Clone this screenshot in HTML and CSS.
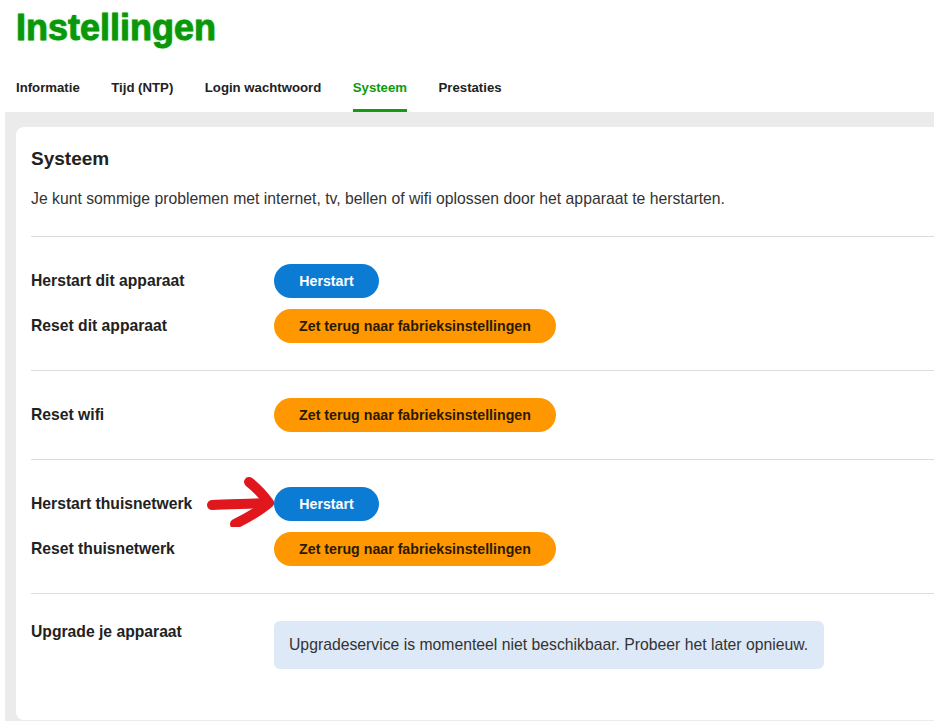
FILE: index.html
```html
<!DOCTYPE html>
<html lang="nl">
<head>
<meta charset="utf-8">
<title>Instellingen</title>
<link rel="stylesheet" href="styles.css">
</head>
<body>
<h1 class="page-title">Instellingen</h1>
<nav class="tabs">
  <a class="tab">Informatie</a>
  <a class="tab">Tijd (NTP)</a>
  <a class="tab">Login wachtwoord</a>
  <a class="tab tab-active">Systeem</a>
  <a class="tab">Prestaties</a>
</nav>
<div class="panel">
  <div class="card">
    <h2 class="card-title">Systeem</h2>
    <p class="card-desc">Je kunt sommige problemen met internet, tv, bellen of wifi oplossen door het apparaat te herstarten.</p>

    <section class="section">
      <div class="row">
        <div class="label">Herstart dit apparaat</div>
        <button class="btn btn-blue">Herstart</button>
      </div>
      <div class="row">
        <div class="label">Reset dit apparaat</div>
        <button class="btn btn-orange">Zet terug naar fabrieksinstellingen</button>
      </div>
    </section>

    <section class="section">
      <div class="row">
        <div class="label">Reset wifi</div>
        <button class="btn btn-orange">Zet terug naar fabrieksinstellingen</button>
      </div>
    </section>

    <section class="section">
      <div class="row">
        <div class="label">Herstart thuisnetwerk</div>
        <div class="btn-wrap">
          <svg class="arrow" width="70" height="52" viewBox="0 0 70 52" aria-hidden="true">
            <path d="M6 30 C 24 29, 44 29, 62 28" fill="none" stroke="#e0171d" stroke-width="10" stroke-linecap="round"/>
            <path d="M43 7 C 52 14, 58 21, 63 28 C 56 34, 45 41, 29 49" fill="none" stroke="#e0171d" stroke-width="10" stroke-linecap="round" stroke-linejoin="round"/>
          </svg>
          <button class="btn btn-blue">Herstart</button>
        </div>
      </div>
      <div class="row">
        <div class="label">Reset thuisnetwerk</div>
        <button class="btn btn-orange">Zet terug naar fabrieksinstellingen</button>
      </div>
    </section>

    <section class="section section-last">
      <div class="row row-top">
        <div class="label label-top">Upgrade je apparaat</div>
        <div class="info">Upgradeservice is momenteel niet beschikbaar. Probeer het later opnieuw.</div>
      </div>
    </section>
  </div>
</div>
</body>
</html>
```
FILE: styles.css
```css
* { box-sizing: border-box; }
html, body { margin: 0; background: #ffffff; }
body {
  font-family: "Liberation Sans", Arial, sans-serif;
  color: #222;
  width: 949px;
  height: 723px;
  overflow: hidden;
}
.page-title {
  margin: 0;
  padding: 6px 0 0 16px;
  font-size: 36px;
  line-height: 44px;
  font-weight: 700;
  color: #0b970b;
  -webkit-text-stroke: 0.8px #0b970b;
  text-shadow: 0 0 2px #4fdc4f;
}
.tabs {
  display: flex;
  gap: 31.5px;
  padding: 30px 0 0 16px;
}
.tab {
  font-size: 13.2px;
  font-weight: 700;
  color: #222;
  line-height: 16px;
  padding-bottom: 13px;
  border-bottom: 3px solid transparent;
  cursor: pointer;
}
.tab-active {
  color: #0d9a0d;
  border-bottom-color: #129c12;
}
.panel {
  margin-left: 5px;
  width: 929px;
  background: #ebebeb;
  padding: 15px 0 1px 11px;
}
.card {
  background: #fff;
  border-radius: 8px 0 0 8px;
  padding: 0 0 51px 15px;
}
.card-title {
  margin: 0;
  padding-top: 21px;
  font-size: 19px;
  line-height: 22px;
  font-weight: 700;
  color: #222;
}
.card-desc {
  margin: 0;
  padding-top: 20px;
  padding-bottom: 28px;
  font-size: 15.75px;
  line-height: 18px;
  color: #333;
}
.section {
  border-top: 1px solid #dcdcdc;
  padding: 27px 0 27px 0;
  display: flex;
  flex-direction: column;
  gap: 11px;
}
.section-last { padding-bottom: 0; }
.row {
  display: grid;
  grid-template-columns: 243px auto;
  align-items: center;
  justify-items: start;
}
.row-top { align-items: start; }
.label {
  font-size: 15.7px;
  font-weight: 700;
  color: #222;
  line-height: 18px;
}
.label-top { padding-top: 2px; }
.btn-wrap { position: relative; }
.arrow {
  position: absolute;
  left: -68px;
  top: -12px;
}
.btn {
  border: 0;
  border-radius: 17px;
  height: 34px;
  padding: 0;
  font-family: "Liberation Sans", Arial, sans-serif;
  font-size: 14.2px;
  font-weight: 700;
  cursor: pointer;
}
.btn-blue {
  background: #0b7bd3;
  color: #fff;
  width: 105px;
}
.btn-orange {
  background: #ff9800;
  color: #2a1a00;
  width: 282px;
}
.info {
  background: #dde9f6;
  border-radius: 6px;
  width: 550px;
  height: 48px;
  padding: 0 15px;
  display: flex;
  align-items: center;
  font-size: 15.75px;
  color: #333;
}
```
